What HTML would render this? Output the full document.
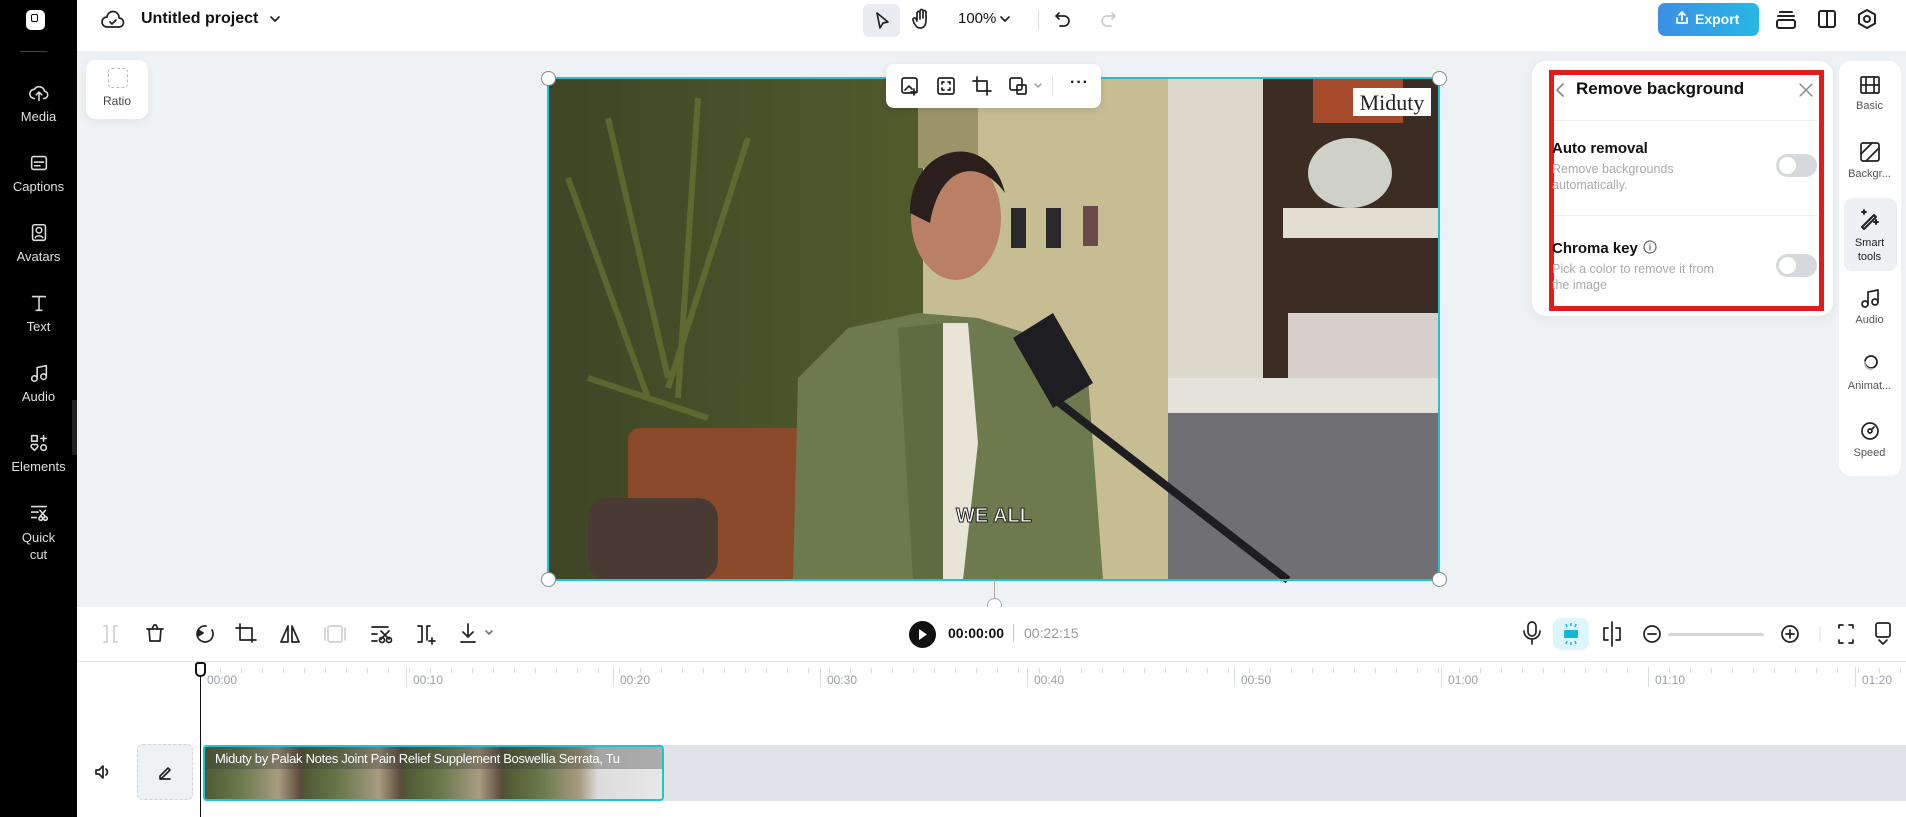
<!DOCTYPE html>
<html><head><meta charset="utf-8"><style>
*{box-sizing:border-box;margin:0;padding:0}
body{width:1906px;height:817px;overflow:hidden;background:#fff;font-family:"Liberation Sans",sans-serif;position:relative;color:#111}
.abs{position:absolute}
.side{left:0;top:0;width:77px;height:817px;background:#000;color:#d8d8d8}
.side .it{position:absolute;left:0;width:77px;text-align:center;font-size:13px;color:#e0e0e0}
.side svg{display:block;margin:0 auto 5px}
.top{left:77px;top:0;width:1829px;height:51px;background:#fff}
.canvas{left:77px;top:51px;width:1829px;height:556px;background:#eff2f5}
.tl{left:77px;top:607px;width:1829px;height:210px;background:#fff}
svg{overflow:visible}
.ic{stroke:#222;fill:none;stroke-width:1.7;stroke-linecap:round;stroke-linejoin:round}
.rt{font-size:11px;color:#555;text-align:center;position:absolute;width:61px;left:0}
.rt svg{display:block;margin:0 auto 6px}
.lbl{position:absolute;top:673px;font-size:12px;color:#9aa0a8}
</style></head><body>

<div class="abs side">
  <div class="abs" style="left:26px;top:10px;width:19px;height:20px;background:#fff;border-radius:5px"></div>
  <div class="abs" style="left:31px;top:14px;width:7px;height:8px;border:1.5px solid #000;border-radius:2px"></div>
  <div class="abs" style="left:20px;top:51px;width:27px;height:1px;background:#444"></div>
  <div class="it" style="top:82px"><svg width="22" height="22" viewBox="0 0 24 24" class="ic" style="stroke:#ddd"><path d="M7 18a5 5 0 0 1 0-10 6 6 0 0 1 11 2 4 4 0 0 1-1 8M12 20v-8M9 14l3-3 3 3"/></svg>Media</div>
  <div class="it" style="top:152px"><svg width="22" height="22" viewBox="0 0 24 24" class="ic" style="stroke:#ddd"><rect x="4" y="5" width="16" height="14" rx="2"/><path d="M7 11h10M7 15h6"/></svg>Captions</div>
  <div class="it" style="top:222px"><svg width="22" height="22" viewBox="0 0 24 24" class="ic" style="stroke:#ddd"><rect x="5" y="3" width="14" height="17" rx="2"/><circle cx="12" cy="9" r="3"/><path d="M8 17c1-2 6-3 8 0"/></svg>Avatars</div>
  <div class="it" style="top:292px"><svg width="22" height="22" viewBox="0 0 24 24" class="ic" style="stroke:#ddd"><path d="M5 5h14M12 5v15M9 20h6"/></svg>Text</div>
  <div class="it" style="top:362px"><svg width="22" height="22" viewBox="0 0 24 24" class="ic" style="stroke:#ddd"><circle cx="7" cy="18" r="3"/><circle cx="17" cy="16" r="3"/><path d="M10 18V6l10-2v12"/></svg>Audio</div>
  <div class="it" style="top:432px"><svg width="22" height="22" viewBox="0 0 24 24" class="ic" style="stroke:#ddd"><rect x="4" y="4" width="6" height="6"/><path d="M17 4v6M14 7h6"/><circle cx="17" cy="17" r="3"/><path d="M7 20l-3-3a2 2 0 0 1 3-3 2 2 0 0 1 3 3z"/></svg>Elements</div>
  <div class="it" style="top:502px;line-height:17px"><svg width="22" height="22" viewBox="0 0 24 24" class="ic" style="stroke:#ddd"><path d="M4 5h16M4 11h7M4 17h5"/><circle cx="14" cy="18" r="2"/><circle cx="19" cy="18" r="2"/><path d="M13 9l6 7M19 9l-6 7"/></svg>Quick<br>cut</div>
  <div class="abs" style="left:72px;top:400px;width:12px;height:55px;background:#222;border-radius:0 6px 6px 0"></div>
</div>

<div class="abs top">
  <svg class="abs ic" style="left:24px;top:10px" width="24" height="22" viewBox="0 0 24 22"><path d="M6 17a5 5 0 0 1 0-10 6 6 0 0 1 12 1 4.5 4.5 0 0 1 0 9z"/><path d="M9 12l2 2 4-4"/></svg>
  <div class="abs" style="left:64px;top:10px;font-size:16px;font-weight:bold">Untitled project</div>
  <svg class="abs ic" style="left:192px;top:15px" width="12" height="8" viewBox="0 0 12 8"><path d="M2 2l4 4 4-4"/></svg>
  <div class="abs" style="left:786px;top:4px;width:37px;height:33px;background:#e9ecf0;border-radius:6px"></div>
  <svg class="abs ic" style="left:796px;top:10px" width="18" height="22" viewBox="0 0 18 22"><path d="M4 3l11 9-5 1-3 5z"/></svg>
  <svg class="abs ic" style="left:834px;top:8px" width="20" height="22" viewBox="0 0 20 22"><path d="M6 12V5a1.5 1.5 0 0 1 3 0v6M9 10V3a1.5 1.5 0 0 1 3 0v7M12 10V4a1.5 1.5 0 0 1 3 0v8c0 5-2 8-6 8-3 0-4-2-6-5l-1-3a1.5 1.5 0 0 1 3-1l1 2"/></svg>
  <div class="abs" style="left:881px;top:10px;font-size:15px">100%</div>
  <svg class="abs ic" style="left:923px;top:16px" width="10" height="7" viewBox="0 0 10 7"><path d="M1 1l4 4 4-4"/></svg>
  <div class="abs" style="left:961px;top:10px;width:1px;height:20px;background:#ddd"></div>
  <svg class="abs ic" style="left:977px;top:10px" width="18" height="18" viewBox="0 0 18 18"><path d="M5 3L2 6l3 3M2 6h8a5 5 0 0 1 0 10H6"/></svg>
  <svg class="abs ic" style="left:1022px;top:10px;stroke:#ccc" width="18" height="18" viewBox="0 0 18 18"><path d="M13 3l3 3-3 3M16 6H8a5 5 0 0 0 0 10h4"/></svg>
  <div class="abs" style="left:1581px;top:3px;width:101px;height:33px;border-radius:7px;background:linear-gradient(90deg,#3d8fe6,#27b7e4);color:#fff;font-weight:bold;font-size:14px;line-height:33px;padding-left:37px">Export</div>
  <svg class="abs ic" style="left:1598px;top:11px;stroke:#fff" width="14" height="14" viewBox="0 0 14 14"><path d="M7 9V1M4 4l3-3 3 3M2 7v5h10V7"/></svg>
  <svg class="abs ic" style="left:1698px;top:9px;stroke-width:2" width="22" height="22" viewBox="0 0 22 22"><path d="M5 3h12M3 7h16"/><rect x="2" y="11" width="18" height="8" rx="2"/></svg>
  <svg class="abs ic" style="left:1740px;top:9px;stroke-width:2" width="20" height="20" viewBox="0 0 20 20"><rect x="2" y="2" width="16" height="16" rx="2"/><path d="M10 2v16"/></svg>
  <svg class="abs ic" style="left:1780px;top:8px;stroke-width:2" width="20" height="22" viewBox="0 0 20 22"><path d="M10 2l8 4.5v9L10 20l-8-4.5v-9z"/><circle cx="10" cy="11" r="3"/></svg>
</div>

<div class="abs canvas">
  <div class="abs" style="left:9px;top:9px;width:62px;height:59px;background:#fff;border-radius:10px;box-shadow:0 2px 10px rgba(0,0,0,.06)">
    <div class="abs" style="left:22px;top:8px;width:20px;height:20px;border:1.5px dashed #bbb;border-radius:4px"></div>
    <div class="abs" style="left:0;top:34px;width:62px;text-align:center;font-size:12px;color:#444">Ratio</div>
  </div>
</div>

<!-- video -->
<svg class="abs" style="left:548px;top:78px" width="891" height="502" viewBox="0 0 891 502">
  <defs><linearGradient id="pl" x1="0" x2="1"><stop offset="0" stop-color="#3e4526"/><stop offset=".5" stop-color="#55602c"/><stop offset="1" stop-color="#6a6b3a"/></linearGradient></defs>
  <rect width="891" height="502" fill="url(#pl)"/>
  <path d="M20 100l80 220M60 40l60 260M150 20l-20 300M200 60l-80 250M40 300l120 40" stroke="#6f7a34" stroke-width="6" opacity=".6"/>
  <rect x="375" y="0" width="250" height="502" fill="#c7bd92"/>
  <rect x="370" y="0" width="60" height="90" fill="#9a9468"/>
  <rect x="620" y="0" width="95" height="502" fill="#dcd8cc"/>
  <rect x="715" y="0" width="176" height="502" fill="#3b2c24"/>
  <rect x="735" y="130" width="156" height="30" fill="#e2ded2"/>
  <rect x="740" y="235" width="150" height="70" fill="#d9cfcc"/>
  <ellipse cx="802" cy="95" rx="42" ry="35" fill="#cfd0c8"/>
  <rect x="765" y="0" width="90" height="45" fill="#a54a2a"/>
  <rect x="620" y="330" width="271" height="172" fill="#707074"/>
  <rect x="620" y="300" width="271" height="35" fill="#e4e2da"/>
  <rect x="463" y="130" width="15" height="40" fill="#2a2a2e"/><rect x="498" y="130" width="15" height="40" fill="#2a2a2e"/><rect x="535" y="128" width="15" height="40" fill="#6a4a4a"/>
  <rect x="80" y="350" width="185" height="152" rx="12" fill="#8a4a2a"/>
  <rect x="40" y="420" width="130" height="82" rx="20" fill="#4a3a34"/>
  <path d="M245 502L250 300 300 250 370 235 430 240 510 265 540 300 555 502z" fill="#6c7a4e"/>
  <path d="M395 245l25 0 10 120 -15 137h-25z" fill="#e8e4d8"/>
  <path d="M350 250l45 -5 0 257h-30z" fill="#5e6c42"/>
  <ellipse cx="408" cy="140" rx="45" ry="62" fill="#b98066"/>
  <path d="M362 135c0-70 80-85 95-20 -25-35-65-30-75 30z" fill="#2a1f1c"/>
  <path d="M465 260l40-25 40 70 -40 25z" fill="#1e1e22"/>
  <path d="M505 320l235 182" stroke="#1e1e22" stroke-width="8"/>
  <rect x="805" y="10" width="78" height="28" fill="#fff"/>
  <text x="844" y="32" font-family="Liberation Serif,serif" font-size="22" text-anchor="middle" fill="#222">Miduty</text>
  <text x="446" y="444" font-family="Liberation Sans,sans-serif" font-weight="bold" font-size="20" text-anchor="middle" fill="#fff" stroke="#222" stroke-width="1">WE ALL</text>
  <rect x="0" y="0" width="891" height="502" fill="none" stroke="#1ec3d6" stroke-width="2"/>
</svg>
<div class="abs" style="left:541px;top:71px;width:15px;height:15px;border-radius:50%;background:#fff;border:1px solid #888"></div>
<div class="abs" style="left:1432px;top:71px;width:15px;height:15px;border-radius:50%;background:#fff;border:1px solid #888"></div>
<div class="abs" style="left:541px;top:572px;width:15px;height:15px;border-radius:50%;background:#fff;border:1px solid #888"></div>
<div class="abs" style="left:1432px;top:572px;width:15px;height:15px;border-radius:50%;background:#fff;border:1px solid #888"></div>
<div class="abs" style="left:994px;top:580px;width:1px;height:20px;background:#aaa"></div>
<div class="abs" style="left:987px;top:598px;width:15px;height:15px;border-radius:50%;background:#fff;border:1px solid #aaa"></div>

<!-- floating toolbar -->
<div class="abs" style="left:886px;top:64px;width:215px;height:44px;background:#fff;border-radius:8px;box-shadow:0 2px 8px rgba(0,0,0,.1)">
  <svg class="abs ic" style="left:14px;top:12px" width="20" height="20" viewBox="0 0 20 20"><rect x="2" y="2" width="15" height="15" rx="2"/><path d="M5 14l4-4 3 3M14 13v6M11 16h6"/></svg>
  <svg class="abs ic" style="left:50px;top:12px" width="20" height="20" viewBox="0 0 20 20"><rect x="2" y="2" width="16" height="16" rx="2"/><path d="M6 8V6h2M12 6h2v2M14 12v2h-2M8 14H6v-2"/></svg>
  <svg class="abs ic" style="left:86px;top:12px" width="20" height="20" viewBox="0 0 20 20"><path d="M5 1v14h14M1 5h14v14"/></svg>
  <svg class="abs ic" style="left:122px;top:12px" width="20" height="20" viewBox="0 0 20 20"><rect x="2" y="2" width="12" height="12" rx="2"/><rect x="9" y="9" width="9" height="9" rx="1"/></svg>
  <svg class="abs ic" style="left:148px;top:19px;stroke:#aaa" width="8" height="6" viewBox="0 0 8 6"><path d="M1 1l3 3 3-3"/></svg>
  <div class="abs" style="left:166px;top:12px;width:1px;height:20px;background:#e5e5e5"></div>
  <div class="abs" style="left:184px;top:10px;font-size:16px;font-weight:bold;letter-spacing:1px">···</div>
</div>

<!-- remove background panel -->
<div class="abs" style="left:1532px;top:61px;width:301px;height:255px;background:#fff;border-radius:14px;box-shadow:0 2px 12px rgba(0,0,0,.06)"></div>
<div class="abs" style="left:1549px;top:70px;width:275px;height:241px;border:5px solid #e51a1a"></div>
<svg class="abs ic" style="left:1555px;top:82px;stroke:#888" width="10" height="16" viewBox="0 0 10 16"><path d="M8 2L2 8l6 6"/></svg>
<div class="abs" style="left:1576px;top:79px;font-size:17px;font-weight:bold">Remove background</div>
<svg class="abs ic" style="left:1799px;top:83px;stroke:#888;stroke-width:1.4" width="14" height="14" viewBox="0 0 14 14"><path d="M1 1l12 12M13 1L1 13"/></svg>
<div class="abs" style="left:1554px;top:120px;width:263px;height:1px;background:#eee"></div>
<div class="abs" style="left:1552px;top:140px;font-size:15px;font-weight:bold">Auto removal</div>
<div class="abs" style="left:1552px;top:161px;font-size:12.5px;color:#aaa;line-height:16px">Remove backgrounds<br>automatically.</div>
<div class="abs" style="left:1776px;top:154px;width:41px;height:23px;border-radius:12px;background:#d5d9de"><div class="abs" style="left:3px;top:3px;width:17px;height:17px;border-radius:50%;background:#fff"></div></div>
<div class="abs" style="left:1554px;top:215px;width:263px;height:1px;background:#eee"></div>
<div class="abs" style="left:1552px;top:240px;font-size:15px;font-weight:bold">Chroma key</div>
<svg class="abs ic" style="left:1643px;top:240px;stroke:#666;stroke-width:1.2" width="14" height="14" viewBox="0 0 14 14"><circle cx="7" cy="7" r="6"/><path d="M7 6v4M7 4v.1"/></svg>
<div class="abs" style="left:1552px;top:261px;font-size:12.5px;color:#aaa;line-height:16px">Pick a color to remove it from<br>the image</div>
<div class="abs" style="left:1776px;top:254px;width:41px;height:23px;border-radius:12px;background:#d5d9de"><div class="abs" style="left:3px;top:3px;width:17px;height:17px;border-radius:50%;background:#fff"></div></div>

<!-- right strip -->
<div class="abs" style="left:1839px;top:61px;width:62px;height:415px;background:#fff;border-radius:12px">
  <div class="abs" style="left:5px;top:137px;width:53px;height:73px;background:#eef1f4;border-radius:8px"></div>
  <div class="rt" style="top:15px"><svg width="20" height="18" viewBox="0 0 20 18" class="ic"><rect x="1" y="1" width="18" height="16" rx="1"/><path d="M6 1v16M14 1v16M1 9h18"/></svg>Basic</div>
  <div class="rt" style="top:81px"><svg width="20" height="20" viewBox="0 0 20 20" class="ic"><rect x="1" y="1" width="18" height="18" rx="2"/><path d="M1 12L12 1M6 19L19 6"/></svg>Backgr...</div>
  <div class="rt" style="top:147px;color:#222;line-height:14px"><svg width="22" height="22" viewBox="0 0 22 22" class="ic" style="stroke-width:2"><path d="M3 19L15 7l2 2L5 21z"/><path d="M5 2v4M3 4h4M17 12v4M15 14h4"/></svg>Smart<br>tools</div>
  <div class="rt" style="top:227px"><svg width="20" height="20" viewBox="0 0 20 20" class="ic"><circle cx="5" cy="16" r="3"/><circle cx="15" cy="14" r="3"/><path d="M8 16V4l10-2v12"/></svg>Audio</div>
  <div class="rt" style="top:293px"><svg width="20" height="20" viewBox="0 0 20 20" class="ic"><circle cx="11" cy="8" r="6"/><path d="M5 8a6 6 0 0 0 7 7" stroke="#bbb"/></svg>Animat...</div>
  <div class="rt" style="top:360px"><svg width="20" height="20" viewBox="0 0 20 20" class="ic"><circle cx="10" cy="10" r="8"/><circle cx="10" cy="10" r="2"/><path d="M11.5 8.5L14 6"/></svg>Speed</div>
</div>

<!-- timeline -->
<div class="abs tl"></div>
<div class="abs" style="left:77px;top:661px;width:1829px;height:1px;background:#e6e6e6"></div>
<svg class="abs" style="left:0;top:620px" width="520" height="28" viewBox="0 0 520 28">
  <g class="ic" style="stroke:#ccd0d6"><path d="M104 6h3v16h-3M117 6h-3v16h3"/></g>
  <g class="ic"><path d="M147 9h16M152 9l2-4h2l2 4M149 9l1 12h10l1-12"/></g>
  <g class="ic"><path d="M206 6a8 8 0 1 0 6 4"/><path d="M198 10l5 3-5 3z" fill="#222"/></g>
  <g class="ic"><path d="M240 4v16h16M236 8h16v14"/></g>
  <g class="ic"><path d="M288 6v16h-7zM292 6v16h7z"/></g>
  <g class="ic" style="stroke:#ccd0d6"><rect x="328" y="6" width="14" height="16" rx="2"/><path d="M325 8v12M345 8v12"/></g>
  <g class="ic"><path d="M372 7h16M372 14h5M372 21h5"/><circle cx="382" cy="20" r="2.5"/><circle cx="389" cy="20" r="2.5"/><path d="M381 11l8 8M389 11l-8 8"/></g>
  <g class="ic"><path d="M418 6h4v16h-4M430 6h-3v14"/><path d="M432 18v6M429 21h6"/></g>
  <g class="ic"><path d="M468 4v13M463 12l5 5 5-5M461 22h14"/><path d="M486 11l3 3 3-3" stroke="#777"/></g>
</svg>
<div class="abs" style="left:909px;top:621px;width:27px;height:27px;border-radius:50%;background:#111"></div>
<svg class="abs" style="left:918px;top:629px" width="10" height="11"><path d="M1 0l8 5.5L1 11z" fill="#fff"/></svg>
<div class="abs" style="left:948px;top:625px;font-size:14px;font-weight:bold">00:00:00</div>
<div class="abs" style="left:1013px;top:624px;width:1px;height:18px;background:#ccc"></div>
<div class="abs" style="left:1024px;top:625px;font-size:14px;color:#999">00:22:15</div>
<svg class="abs" style="left:1520px;top:618px" width="380" height="32" viewBox="0 0 380 32">
  <g class="ic"><rect x="8" y="4" width="8" height="14" rx="4"/><path d="M4 13a8 8 0 0 0 16 0M12 21v5"/></g>
  <rect x="33" y="0" width="36" height="32" rx="8" fill="#def6fb"/>
  <rect x="44" y="12" width="14" height="8" rx="1" fill="#17b7d0"/>
  <path d="M46 6l1 3M51 5v3M56 6l-1 3M46 26l1-3M51 27v-3M56 26l-1-3" stroke="#17b7d0" stroke-width="1.5"/>
  <g class="ic"><path d="M92 4v24M88 10h-4v12h4M96 10h4v12h-4"/></g>
  <g class="ic"><circle cx="132" cy="16" r="8"/><path d="M128 16h8"/></g>
  <rect x="148" y="15" width="96" height="3" rx="1.5" fill="#d3d7dc"/>
  <g class="ic"><circle cx="270" cy="16" r="8"/><path d="M266 16h8M270 12v8"/></g>
  <path d="M300 8v16" stroke="#e2e2e2"/>
  <g class="ic"><path d="M319 10V7h4M329 7h4v3M333 22v3h-4M323 25h-4v-3"/></g>
  <g class="ic"><rect x="356" y="5" width="14" height="14" rx="2"/><path d="M359 22l4 4 4-4"/></g>
</svg>
<!-- ruler -->
<div class="abs" style="left:200px;top:662px;width:1706px;height:30px;background:repeating-linear-gradient(90deg,transparent 0 20px,#dadde2 20px 21px);clip-path:inset(6px 0 19px 0)"></div>
<div class="abs" style="left:406px;top:667px;width:1px;height:20px;background:#dadde2"></div>
<div class="abs" style="left:613px;top:667px;width:1px;height:20px;background:#dadde2"></div>
<div class="abs" style="left:820px;top:667px;width:1px;height:20px;background:#dadde2"></div>
<div class="abs" style="left:1027px;top:667px;width:1px;height:20px;background:#dadde2"></div>
<div class="abs" style="left:1234px;top:667px;width:1px;height:20px;background:#dadde2"></div>
<div class="abs" style="left:1441px;top:667px;width:1px;height:20px;background:#dadde2"></div>
<div class="abs" style="left:1648px;top:667px;width:1px;height:20px;background:#dadde2"></div>
<div class="abs" style="left:1855px;top:667px;width:1px;height:20px;background:#dadde2"></div>
<div class="lbl" style="left:207px">00:00</div>
<div class="lbl" style="left:413px">00:10</div>
<div class="lbl" style="left:620px">00:20</div>
<div class="lbl" style="left:827px">00:30</div>
<div class="lbl" style="left:1034px">00:40</div>
<div class="lbl" style="left:1241px">00:50</div>
<div class="lbl" style="left:1448px">01:00</div>
<div class="lbl" style="left:1655px">01:10</div>
<div class="lbl" style="left:1862px">01:20</div>

<!-- track -->
<div class="abs" style="left:203px;top:745px;width:1703px;height:56px;background:#e0e4e8"></div>
<svg class="abs ic" style="left:94px;top:763px" width="18" height="18" viewBox="0 0 18 18"><path d="M2 7h3l4-4v12l-4-4H2z"/><path d="M12 6a4 4 0 0 1 0 6"/></svg>
<div class="abs" style="left:137px;top:744px;width:56px;height:56px;border:1px dashed #d0d4d8;border-radius:6px;background:#eff2f5"></div>
<svg class="abs ic" style="left:157px;top:764px" width="16" height="16" viewBox="0 0 16 16"><path d="M3 12l8-8 2 2-8 8H3zM3 15h10"/></svg>
<div class="abs" style="left:203px;top:745px;width:461px;height:56px;border:2px solid #1ec3d6;border-radius:4px;overflow:hidden;background:linear-gradient(90deg,#4f5a32 0,#6c7a4e 8%,#a89c80 16%,#5a4a3a 21%,#4f5a32 22%,#6c7a4e 30%,#a89c80 38%,#5a4a3a 43%,#4f5a32 44%,#6c7a4e 52%,#a89c80 60%,#5a4a3a 65%,#4f5a32 66%,#6c7a4e 74%,#a89c80 82%,#dcdcdc 86%,#e8e8e8 100%)">
  <div class="abs" style="left:0;top:0;width:461px;height:22px;background:rgba(60,60,60,.35)"></div>
  <div class="abs" style="left:10px;top:4px;font-size:13px;color:#fff;white-space:nowrap;letter-spacing:-.3px">Miduty by Palak Notes Joint Pain Relief Supplement Boswellia Serrata, Tu</div>
</div>
<div class="abs" style="left:200px;top:667px;width:1px;height:150px;background:#111"></div>
<div class="abs" style="left:195px;top:662px;width:11px;height:15px;border:2px solid #111;border-radius:3px 3px 5px 5px;background:#fff"></div>
</body></html>
